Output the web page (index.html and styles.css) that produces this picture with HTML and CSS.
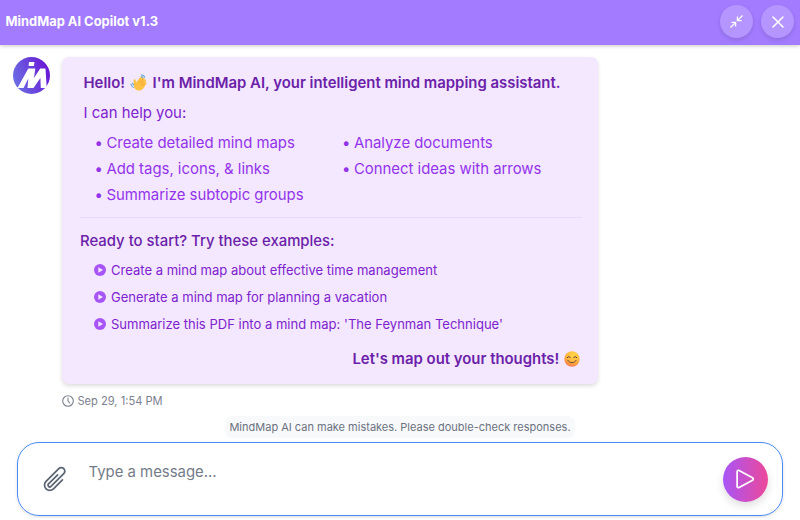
FILE: index.html
```html
<!DOCTYPE html>
<html lang="en">
<head>
  <meta charset="UTF-8">
  <meta name="viewport" content="width=device-width, initial-scale=1.0">
  <title>MindMap AI Copilot</title>
  <link rel="stylesheet" href="styles.css">
</head>
<body>
<div class="chat">
  <header class="header">
    <h1>MindMap AI Copilot v1.3</h1>
    <div class="header-actions">
      <button class="round-btn" aria-label="Minimize">
        <svg width="13" height="13" viewBox="0 0 14 14" fill="none" stroke="currentColor" stroke-width="1.4"><path d="M13.5.5 8.2 5.8M8 1.5V6h4.5M.5 13.5l5.3-5.3M1.5 8H6v4.5"/></svg>
      </button>
      <button class="round-btn" aria-label="Close">
        <svg width="12" height="12" viewBox="0 0 12 12" fill="none" stroke="currentColor" stroke-width="1.6" stroke-linecap="round"><path d="m1 1 10 10M11 1 1 11"/></svg>
      </button>
    </div>
  </header>

  <main class="messages">
    <svg class="avatar" viewBox="0 0 37 37">
      <defs>
        <linearGradient id="logo" x1="0" y1=".65" x2="1" y2=".3">
          <stop offset="0" stop-color="#6b70e4"/>
          <stop offset="1" stop-color="#6a14d4"/>
        </linearGradient>
      </defs>
      <circle cx="18.5" cy="18.5" r="18.500" fill="url(#logo)"/>
      <path fill="#fff" d="M16 5h5.500l-.6 4h-5.300zM15.300 11.500h7l-1.300 9.500 6.200-9.500h5.300l1.200 19.500h-5.900l-.4-10L20.500 31h-6l.8-9.500L10.500 31H4.500z"/>
    </svg>
    <div class="message">
      <div class="bubble">
        <div class="intro">
          <p class="hello">Hello!
            <svg class="emoji" viewBox="0 0 18 18">
              <path d="M7.200 2.500 13.500 8.200l.2-2.400c.1-1.700 2.100-1.400 2.200.1l.5 5.600c.4 5.500-6.400 7.500-9.800 3.900L2.900 11.300c-1-1.200.3-2.300 1.300-1.400L3 8.400C2 7.100 3.400 6 4.500 7.100L4 6.200c-.8-1.300.8-2.500 1.900-1.200-.8-1.500.2-2.900 1.300-2.500z" fill="#ffc145" transform="matrix(-1 0 0 1 20 0) rotate(8 9 9)"/>
              <path d="m15 7.500-3.700 4M13.500 5.500l-3.800 4.200M15.500 10.300l-2.600 2.600" fill="none" stroke="#e59a23" stroke-width=".7"/>
              <path d="M11.500 1.200c2-.5 3.700.5 4 2.600M11.500 3c1-.2 1.800.3 2.200 1.500M.8 10.300c.3 2 1.400 3.500 3.200 4.200M2.500 9.300c.2 1.200.8 2 1.800 2.700" fill="none" stroke="#5fa8e0" stroke-width="1.200"/>
            </svg>
            I'm MindMap AI, your intelligent mind mapping assistant.</p>
          <p class="help">I can help you:</p>
          <div class="features">
            <ul>
              <li>Create detailed mind maps</li>
              <li>Add tags, icons, &amp; links</li>
              <li>Summarize subtopic groups</li>
            </ul>
            <ul>
              <li>Analyze documents</li>
              <li>Connect ideas with arrows</li>
            </ul>
          </div>
        </div>
        <div class="examples">
          <p class="ready">Ready to start? Try these examples:</p>
          <ul>
            <li><svg class="play" viewBox="0 0 12 12"><circle cx="6" cy="6" r="6"/><path d="M4.300 3.300v5.400L9 6z"/></svg>Create a mind map about effective time management</li>
            <li><svg class="play" viewBox="0 0 12 12"><circle cx="6" cy="6" r="6"/><path d="M4.300 3.300v5.400L9 6z"/></svg>Generate a mind map for planning a vacation</li>
            <li><svg class="play" viewBox="0 0 12 12"><circle cx="6" cy="6" r="6"/><path d="M4.300 3.300v5.400L9 6z"/></svg>Summarize this PDF into a mind map: 'The Feynman Technique'</li>
          </ul>
        </div>
        <p class="outro">Let's map out your thoughts!
          <svg class="emoji smile" viewBox="0 0 16 16">
            <defs>
              <radialGradient id="face" cx=".6" cy=".25" r=".8">
                <stop offset="0" stop-color="#ffd84a"/>
                <stop offset=".6" stop-color="#fdb43c"/>
                <stop offset="1" stop-color="#f5734e"/>
              </radialGradient>
            </defs>
            <circle cx="8" cy="8" r="7.700" fill="url(#face)"/>
            <path d="M3.300 6.700c.6-1.600 2.200-1.600 2.900 0M9.800 6.700c.6-1.600 2.200-1.600 2.900 0M4 9.500c1.600 3 6.400 3 8 0" fill="none" stroke="#6b3f3a" stroke-width="1" stroke-linecap="round"/>
          </svg>
        </p>
      </div>
      <div class="time">
        <svg width="12" height="12" viewBox="0 0 12 12" fill="none" stroke="currentColor" stroke-width="1.100" stroke-linecap="round"><circle cx="6" cy="6" r="5.300"/><path d="M6 3v3l1.700 2"/></svg>
        <span>Sep 29, 1:54 PM</span>
      </div>
    </div>
  </main>

  <footer class="footer">
    <p class="disclaimer">MindMap AI can make mistakes. Please double-check responses.</p>
    <div class="composer">
      <svg class="clip" viewBox="0 0 24 24" fill="none" stroke="currentColor" stroke-width="1.500" stroke-linecap="round" stroke-linejoin="round"><path d="m18.375 12.739-7.693 7.693a4.500 4.500 0 0 1-6.364-6.364l10.940-10.940A3 3 0 1 1 19.500 7.372L8.552 18.320m.009-.010-.010.010m5.699-9.941-7.810 7.810a1.500 1.500 0 0 0 2.112 2.130"/></svg>
      <textarea placeholder="Type a message..."></textarea>
      <button class="send" aria-label="Send">
        <svg width="28" height="28" viewBox="0 0 24 24" fill="none" stroke="currentColor" stroke-width="1.500" stroke-linejoin="round"><path d="M5.250 5.653c0-.856.917-1.398 1.667-.986l11.540 6.347a1.125 1.125 0 0 1 0 1.972l-11.540 6.347a1.125 1.125 0 0 1-1.667-.986V5.653Z"/></svg>
      </button>
    </div>
  </footer>
</div>
</body>
</html>
```
FILE: styles.css
```css
*{box-sizing:border-box}
body{
  margin:0;
  font-family:Inter,"Liberation Sans",sans-serif;
  font-size:14.9px;
  background:#fff;
}
h1,p,ul{margin:0;padding:0}
ul{list-style:none}
button{border:none;padding:0;color:#fff;display:flex;align-items:center;justify-content:center;border-radius:50%}
.chat{height:520px;display:flex;flex-direction:column;overflow:hidden}

.header{
  height:45px;
  flex:none;
  display:flex;
  align-items:center;
  justify-content:space-between;
  padding:0 6px 2px 5.5px;
  background:#a27bff;
  box-shadow:0 1px 4px rgba(0,0,0,.22);
}
.header h1{font-size:12.9px;font-weight:700;color:#fff}
.header-actions{display:flex;gap:8px}
.round-btn{width:33px;height:33px;background:#b595ff;box-shadow:0 2px 4px rgba(0,0,0,.12)}

.messages{flex:1;display:flex;gap:11.5px;padding:12px 13px 0}
.avatar{width:37px;height:37px;flex:none}
.bubble{
  width:536px;
  height:327px;
  padding:15px 16px 0 18.5px;
  background:#f3e8ff;
  border-radius:7px;
  color:#7e22ce;
  box-shadow:0 2px 4px rgba(0,0,0,.14);
}
.intro{padding-left:3.5px}
.hello{font-weight:600;color:#6b21a8;line-height:23px}
.emoji{width:17px;height:17px;margin:0 2px 0 1px;vertical-align:-3px}
.help{margin-top:7px;line-height:22px}
.features{display:grid;grid-template-columns:247.5px 1fr;margin-top:6px;padding-left:11px;color:#9333ea}
.features li{height:26px;line-height:26px}
.features li::before{content:"•";margin-right:3.5px}
.examples{margin-top:9px;padding-top:12px;border-top:1px solid #e9d9fd}
.ready{font-weight:500;color:#6b21a8;line-height:22px}
.examples ul{margin-top:4px;padding-left:14px}
.examples li{display:flex;align-items:center;gap:5px;height:27px;font-size:13.04px}
.play{width:12px;height:12px;fill:#a855f7}
.play path{fill:#f3e8ff}
.outro{margin-top:11px;text-align:right;font-weight:600;color:#6b21a8;line-height:22px}
.smile{width:16px;height:16px;margin:0 1.5px 0 1px}
.time{display:flex;align-items:center;gap:4px;margin-top:9px;font-size:11.1px;line-height:16px;color:#7b818d}

.footer{display:flex;flex-direction:column;align-items:center;padding:0 17px 4px}
.disclaimer{padding:0 4px;margin-bottom:4px;border-radius:7px;background:#f8f9fb;font-size:11px;line-height:22px;color:#6b7280}
.composer{
  width:100%;
  height:74px;
  display:flex;
  align-items:center;
  padding:0 14.5px 0 22.5px;
  border:1px solid #4a8cf7;
  border-radius:22px;
  box-shadow:0 1px 3px rgba(0,0,0,.15);
}
.clip{width:28px;height:28px;color:#5b6472}
.composer textarea{
  flex:1;
  height:36px;
  margin-left:20px;
  padding:0;
  border:none;
  outline:none;
  resize:none;
  background:none;
  font:inherit;
  line-height:22px;
}
.composer textarea::placeholder{color:#757c89}
.send{width:45px;height:45px;background:linear-gradient(90deg,#a855f7,#ec4899);box-shadow:0 4px 8px rgba(0,0,0,.13)}
```
